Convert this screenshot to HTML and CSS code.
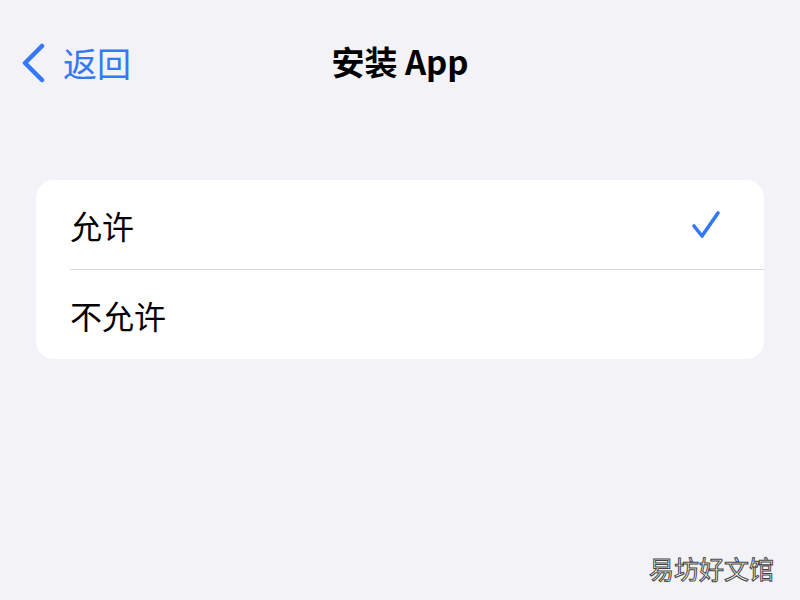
FILE: index.html
```html
<!DOCTYPE html>
<html lang="zh-CN">
<head>
    <meta charset="UTF-8">
    <meta name="viewport" content="width=device-width, initial-scale=1.0">
    <title>安装 App</title>
    <link rel="stylesheet" href="styles.css">
</head>
<body>
    <div class="screen">
        <div class="nav-bar">
            <a class="back-link" href="#">
                <svg class="chevron" width="26" height="40" viewBox="0 0 26 40">
                    <path d="M22 3 L5 20 L22 37" fill="none" stroke="#3478f6" stroke-width="4.5" stroke-linecap="round" stroke-linejoin="round"/>
                </svg>
                <span>返回</span>
            </a>
            <h1 class="nav-title">安装 App</h1>
        </div>

        <div class="option-list">
            <div class="option-row">
                <span class="option-label">允许</span>
                <svg class="check" width="32" height="32" viewBox="0 0 32 32">
                    <path d="M4 17 L12 27 L28 4" fill="none" stroke="#3478f6" stroke-width="3.6" stroke-linecap="round" stroke-linejoin="round"/>
                </svg>
            </div>
            <div class="option-row">
                <span class="option-label">不允许</span>
            </div>
        </div>

        <div class="watermark">易坊好文馆</div>
    </div>
</body>
</html>
```

FILE: styles.css
```css
body {
    margin: 0;
    padding: 0;
    background-color: #f2f2f7;
    font-family: "Noto Sans CJK SC", "Liberation Sans", sans-serif;
}
.screen {
    width: 800px;
    height: 600px;
    position: relative;
    overflow: hidden;
}
.nav-bar {
    height: 128px;
    position: relative;
    display: flex;
    align-items: flex-start;
    justify-content: center;
}
.back-link {
    position: absolute;
    left: 20px;
    top: 41px;
    display: flex;
    align-items: center;
    gap: 17px;
    color: #3478f6;
    text-decoration: none;
    font-size: 34px;
    line-height: 44px;
}
.nav-title {
    margin: 37px 0 0;
    font-size: 33px;
    line-height: 48px;
    font-weight: bold;
    color: #000;
}
.option-list {
    margin: 52px 36px 0;
    background: #fff;
    border-radius: 18px;
    overflow: hidden;
}
.option-row {
    height: 89px;
    display: flex;
    align-items: center;
    justify-content: space-between;
    margin-left: 34px;
    padding-right: 42px;
    border-bottom: 1px solid #d9d9dd;
}
.option-row:last-child {
    border-bottom: none;
}
.option-label {
    font-size: 32px;
    color: #000;
}
.check {
    display: block;
}
.watermark {
    position: absolute;
    right: 26px;
    bottom: 16px;
    font-size: 25px;
    line-height: 32px;
    color: #fff;
    -webkit-text-stroke: 1px #444;
}
```
